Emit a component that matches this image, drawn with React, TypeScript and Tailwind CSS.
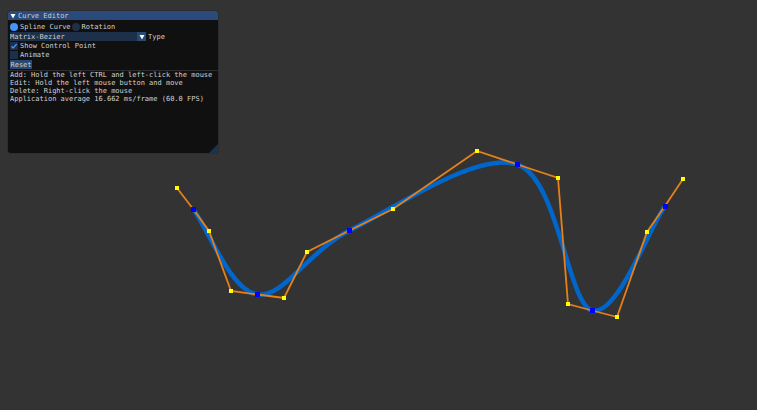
import { useState } from 'react'

type Point = [number, number]

// knots lie on the curve, each with an incoming and an outgoing handle
const knots: { before: Point; at: Point; after: Point }[] = [
  { before: [177, 188], at: [193.5, 209.5], after: [209, 231] },
  { before: [231, 291], at: [257.5, 294.5], after: [284, 298] },
  { before: [307, 252], at: [349.5, 230.5], after: [393, 209] },
  { before: [477, 151], at: [517.5, 164.5], after: [558, 178] },
  { before: [568, 304], at: [592, 310.5], after: [617, 317] },
  { before: [647, 232], at: [665, 206], after: [683, 179] },
]

const curvePath = knots
  .map((k, i) => (i === 0 ? `M${k.at}` : `C${knots[i - 1].after} ${k.before} ${k.at}`))
  .join(' ')

const polygonPoints = knots.map((k) => `${k.before} ${k.at} ${k.after}`).join(' ')

const Canvas = ({ showPoints }: { showPoints: boolean }) => (
  <svg className="w-full flex-1" viewBox="0 0 757 409" preserveAspectRatio="xMinYMin meet">
    <path d={curvePath} fill="none" stroke="#0066cc" strokeWidth="4.5" />
    {showPoints && (
      <>
        <polyline points={polygonPoints} fill="none" stroke="#e6801a" strokeWidth="1.8" />
        {knots.map(({ before, at, after }) => (
          <g key={at.join()} shapeRendering="crispEdges">
            {[before, after].map(([x, y]) => (
              <rect key={x} x={x - 2} y={y - 2} width="4" height="4" fill="#ffff00" />
            ))}
            <rect x={at[0] - 2.5} y={at[1] - 2.5} width="5" height="5" fill="#0000ff" />
          </g>
        ))}
      </>
    )}
  </svg>
)

const Radio = ({ label, checked, onChange }: { label: string; checked: boolean; onChange: () => void }) => (
  <label className="flex items-center gap-0.5">
    <input
      type="radio"
      name="mode"
      checked={checked}
      onChange={onChange}
      className="size-2 appearance-none rounded-full bg-[#1d2f49] checked:bg-[#4296fa]"
    />
    {label}
  </label>
)

const Checkbox = ({ label, checked, onChange }: { label: string; checked: boolean; onChange: (v: boolean) => void }) => (
  <label className="flex h-2 items-center gap-0.5">
    <span className="relative flex size-2">
      <input
        type="checkbox"
        checked={checked}
        onChange={(e) => onChange(e.target.checked)}
        className="size-2 appearance-none bg-[#1d2f49]"
      />
      {checked && (
        <svg className="pointer-events-none absolute inset-0 size-2" viewBox="0 0 8 8">
          <path d="M1.5 4.2 3.2 6 6.7 2" fill="none" stroke="#4296fa" strokeWidth="1.3" />
        </svg>
      )}
    </span>
    {label}
  </label>
)

const App = () => {
  const [mode, setMode] = useState('spline')
  const [type, setType] = useState('Matrix-Bezier')
  const [showPoints, setShowPoints] = useState(true)
  const [animate, setAnimate] = useState(false)

  const reset = () => {
    setMode('spline')
    setType('Matrix-Bezier')
    setShowPoints(true)
    setAnimate(false)
  }

  return (
    <div className="relative flex min-h-screen flex-col border-b border-[#382f36] bg-[#333333]">
      <Canvas showPoints={showPoints} />

      {/* Floating tool window */}
      <section className="absolute top-[11px] left-2 flex min-h-[142px] w-[210px] flex-col overflow-hidden rounded-xs bg-[#101010] font-['DejaVu_Sans_Mono',monospace] text-[7px] leading-[8px] whitespace-nowrap text-[#d0d0d0] outline outline-[#2d2d30]">
        <header className="flex h-[9px] items-center gap-0.5 bg-[#294a7a] px-0.5">
          <svg className="size-[6px] text-white" viewBox="0 0 6 6">
            <path d="M0.5 1h5L3 5.5z" fill="currentColor" />
          </svg>
          <h1>Curve Editor</h1>
        </header>

        <div className="flex flex-col gap-px px-0.5 pt-0.5">
          <div className="flex h-[9px] items-center gap-px">
            <Radio label="Spline Curve" checked={mode === 'spline'} onChange={() => setMode('spline')} />
            <Radio label="Rotation" checked={mode === 'rotation'} onChange={() => setMode('rotation')} />
          </div>

          <div className="flex h-[9px] items-center gap-0.5">
            <div className="relative flex h-[9px] w-[136px]">
              <select
                id="curve-type"
                value={type}
                onChange={(e) => setType(e.target.value)}
                className="w-full appearance-none bg-[#1d2f49]"
              >
                <option>Matrix-Bezier</option>
                <option>Matrix-BSpline</option>
              </select>
              <span className="pointer-events-none absolute inset-y-0 right-0 flex w-[9px] items-center justify-center bg-[#274972]">
                <svg className="size-[6px]" viewBox="0 0 6 6">
                  <path d="M0.5 1h5L3 5.5z" fill="#ffffff" />
                </svg>
              </span>
            </div>
            <label htmlFor="curve-type">Type</label>
          </div>

          <Checkbox label="Show Control Point" checked={showPoints} onChange={setShowPoints} />
          <Checkbox label="Animate" checked={animate} onChange={setAnimate} />

          <button onClick={reset} className="h-[9px] w-[22px] bg-[#274972] text-center">
            Reset
          </button>
        </div>

        <div className="mt-px border-t border-[#2d2d30] px-0.5">
          <p>Add: Hold the left CTRL and left-click the mouse</p>
          <p>Edit: Hold the left mouse button and move</p>
          <p>Delete: Right-click the mouse</p>
          <p>Application average 16.662 ms/frame (60.0 FPS)</p>
        </div>

        <svg className="absolute right-0 bottom-0 size-[9px]" viewBox="0 0 9 9">
          <path d="M9 0v9H0z" fill="#1c3350" />
        </svg>
      </section>
    </div>
  )
}

export default App
